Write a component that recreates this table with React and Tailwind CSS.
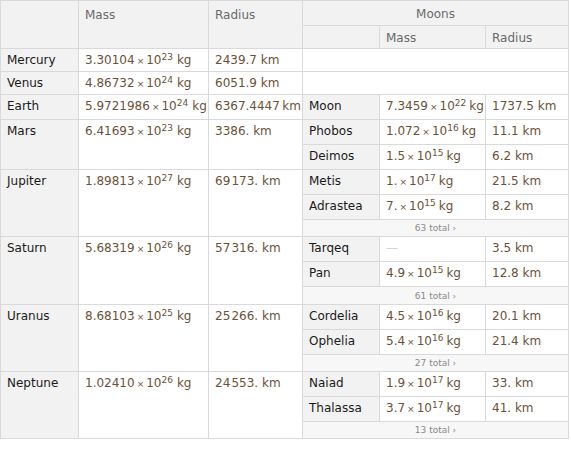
import React from 'react';

const head = 'bg-[#f2f2f2] text-[#6a6a6a]';
const nameCell = 'bg-[#f2f2f2] text-[#1a1a1a] pl-[6px] pt-[4px]';
const valCell = 'bg-white text-[#6b5139] pl-[6px] pt-[4px] whitespace-nowrap';

function Sci({ m, e, moon }) {
  return (
    <>
      {m}
      <span className="text-[9px] mx-[2px]">×</span>
      10<sup>{e}</sup>
      <span className={moon ? 'ml-[3px]' : 'ml-[4px]'}>kg</span>
    </>
  );
}

const planets = [
  { name: 'Mercury', m: '3.30104', e: 23, r: '2439.7 km', moons: [] },
  { name: 'Venus', m: '4.86732', e: 24, r: '6051.9 km', moons: [] },
  { name: 'Earth', m: '5.9721986', e: 24, r: '6367.4447\u2009km', moons: [['Moon', '7.3459', 22, '1737.5 km']] },
  {
    name: 'Mars', m: '6.41693', e: 23, r: '3386. km',
    moons: [['Phobos', '1.072', 16, '11.1 km'], ['Deimos', '1.5', 15, '6.2 km']],
  },
  {
    name: 'Jupiter', m: '1.89813', e: 27, r: '69\u200a173. km',
    moons: [['Metis', '1.', 17, '21.5 km'], ['Adrastea', '7.', 15, '8.2 km']], total: 63,
  },
  {
    name: 'Saturn', m: '5.68319', e: 26, r: '57\u200a316. km',
    moons: [['Tarqeq', null, null, '3.5 km'], ['Pan', '4.9', 15, '12.8 km']], total: 61, th: 17,
  },
  {
    name: 'Uranus', m: '8.68103', e: 25, r: '25\u200a266. km',
    moons: [['Cordelia', '4.5', 16, '20.1 km'], ['Ophelia', '5.4', 16, '21.4 km']], total: 27,
  },
  {
    name: 'Neptune', m: '1.02410', e: 26, r: '24\u200a553. km',
    moons: [['Naiad', '1.9', 17, '33. km'], ['Thalassa', '3.7', 17, '41. km']], total: 13,
  },
];

const span = { 1: 'row-span-1', 2: 'row-span-2', 3: 'row-span-3' };

function rowHeights() {
  const hs = ['24px', '22px'];
  planets.forEach((p) => {
    if (!p.moons.length) hs.push('22px');
    p.moons.forEach(() => hs.push('24px'));
    if (p.total) hs.push(`${p.th || 16}px`);
  });
  return hs.join(' ');
}

export default function App() {
  return (
    <div className="bg-white w-[571px] h-[457px] font-['DejaVu_Sans','Verdana',sans-serif] text-[12px] leading-[15px]">
      <div
        className="grid w-max gap-px p-px bg-[#d9d9d9] grid-cols-[77px_129px_93px_76px_105px_82px]"
        style={{ gridTemplateRows: rowHeights() }}
      >
        <div className={`${head} row-span-2`} />
        <div className={`${head} row-span-2 pl-[6px] pt-[7px]`}>Mass</div>
        <div className={`${head} row-span-2 pl-[6px] pt-[7px]`}>Radius</div>
        <div className={`${head} col-span-3 text-center pt-[6px]`}>Moons</div>
        <div className={head} />
        <div className={`${head} pl-[6px] pt-[5px]`}>Mass</div>
        <div className={`${head} pl-[6px] pt-[5px]`}>Radius</div>

        {planets.map((p) => {
          const n = Math.max(1, p.moons.length + (p.total ? 1 : 0));
          return (
            <React.Fragment key={p.name}>
              <div className={`${nameCell} ${span[n]}`}>{p.name}</div>
              <div className={`${valCell} ${span[n]}`}>
                <Sci m={p.m} e={p.e} />
              </div>
              <div className={`${valCell} ${span[n]}`}>{p.r}</div>
              {!p.moons.length && <div className="bg-white col-span-3" />}
              {p.moons.map(([name, m, e, r]) => (
                <React.Fragment key={name}>
                  <div className={nameCell}>{name}</div>
                  <div className={valCell}>
                    {m ? <Sci m={m} e={e} moon /> : <span className="text-[#d4d4d4]">—</span>}
                  </div>
                  <div className={valCell}>{r}</div>
                </React.Fragment>
              ))}
              {p.total && (
                <div className="col-span-3 bg-[#f7f7f7] flex items-center justify-center text-[9px] leading-[12px] text-[#8a8a8a]">
                  {p.total} total ›
                </div>
              )}
            </React.Fragment>
          );
        })}
      </div>
    </div>
  );
}
